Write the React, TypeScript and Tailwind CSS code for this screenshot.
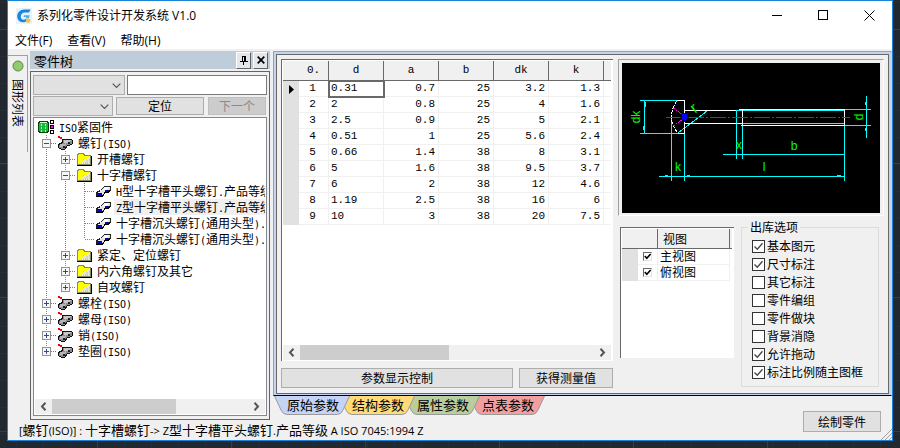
import React from "react";

const sans = "font-['Open_Sans','Noto_Sans_CJK_SC',sans-serif]";
const song = "font-['Noto_Sans_CJK_SC',sans-serif]";

/* Text in which Latin runs are set in a narrow monospaced face. */
function Mixed({ text }: { text: string }) {
  const parts = text.split(/([\x20-\x7e]+)/).filter(Boolean);
  return (
    <>
      {parts.map((part, i) =>
        /^[\x20-\x7e]/.test(part) ? (
          <span key={i} className="font-['DejaVu_Sans_Mono',monospace] text-[10px]">
            {part}
          </span>
        ) : (
          <span key={i}>{part}</span>
        ),
      )}
    </>
  );
}

function AppLogo() {
  return (
    <svg width="16" height="16" viewBox="0 0 16 16" aria-hidden="true">
      <rect width="16" height="16" fill="#e4f3fd" />
      <path d="M14.5 1.5H8.2C4.2 1.5 1.2 4.6 1.2 8.3c0 3.4 2.4 5.9 5.6 5.9 1.6 0 3-.5 4-1.5l-.6-2.2c-.8.8-1.7 1.2-2.7 1.2-1.700 0-2.700-1.200-2.700-2.900C4.800 6.300 6.400 4.600 8.800 4.600h4.300z" fill="#1b86dc" />
      <path d="M8 7.200h5.800l-1 3H10V9H7.500z" fill="#45b4f2" />
      <circle cx="12.200" cy="12.600" r="2.300" fill="#f3bf57" />
    </svg>
  );
}

type Joint = "pass" | "tee" | "end" | "plus" | "minus" | "plusEnd";

/* One column of the tree's dotted guide lines, with its expander box. */
function Guide({ kind }: { kind: Joint }) {
  const box = kind === "plus" || kind === "minus" || kind === "plusEnd";
  const bottom = kind === "end" || kind === "plusEnd" ? 8 : 16;
  return (
    <svg width="19" height="16" viewBox="0 0 19 16" shapeRendering="crispEdges" className="shrink-0" aria-hidden="true">
      <path d={`M9.5 0V${bottom}`} stroke="#808080" strokeDasharray="1 1" />
      {kind !== "pass" && <path d="M10 8.500H19" stroke="#808080" strokeDasharray="1 1" />}
      {box && (
        <>
          <rect x="5.500" y="4.500" width="8" height="8" fill="#f7f7f7" stroke="#919191" />
          <path d="M7 8.500H12" stroke="#34479b" />
          {kind !== "minus" && <path d="M9.500 6V11" stroke="#34479b" />}
        </>
      )}
    </svg>
  );
}

type IconKind = "db" | "part" | "folder" | "screw";

function NodeIcon({ kind }: { kind: IconKind }) {
  return (
    <svg width="19" height="16" viewBox="0 0 19 16" shapeRendering="crispEdges" className="shrink-0" aria-hidden="true">
      {kind === "db" && (
        <>
          <path d="M1.500 3.500l2-1h6l2 1v9l-2 1h-6l-2-1z" fill="#18b83a" stroke="#0b3d14" />
          <path d="M3 3.500h7" stroke="#d7ffd7" />
          <path d="M4.500 5v8M8.500 5v8" stroke="#b9f5c0" strokeDasharray="2 1" />
          <path d="M13.500 1.500h3v3h-3zM13.500 11.500h3v3h-3z" fill="#fff" stroke="#000" />
          <path d="M13.500 6.500h3v3h-3z" fill="#f0f" stroke="#000" />
        </>
      )}
      {kind === "part" && (
        <>
          <path d="M2.500 9.500l4-2V4.500h9l1 1v3l-3 2h-2l-3 4h-3l-3-2z" fill="#8c8c8c" stroke="#111" />
          <path d="M8 5h7l-3 3H8z" fill="#c8c8c8" />
          <path d="M4 9h4l2-1v2l-3 2H4z" fill="#b4b4b4" />
          <path d="M7 11h2v2H7zM12 7h2v2h-2z" fill="#222" />
          <rect x="2" y="1" width="2" height="2" fill="#f00" />
          <rect x="4" y="2" width="2" height="2" fill="#f00" />
        </>
      )}
      {kind === "folder" && (
        <>
          <path d="M2.500 4.500l1-2h5l1 2h6v9h-13z" fill="#ff0" stroke="#8a8a5a" />
          <path d="M15 5v8H5z" fill="#e8e8da" />
          <path d="M14 8h1M12 9h3M11 10h2M10 11h5M8 12h6" stroke="#c9c98f" strokeDasharray="1 1" />
          <path d="M2 14.500h15M16.500 5v10" stroke="#000" />
        </>
      )}
      {kind === "screw" && (
        <>
          <path d="M2.500 9.500l4-2 4-4h6v4l-5 1-3 5h-6z" fill="#e4e4e4" stroke="#222" />
          <path d="M8 7l4-3h4l-4 3z" fill="#fff" />
          <path d="M3 10h5v3H3zM11 7h3v2h-3z" fill="#00c" />
          <path d="M2 13.500h6l3-4h3l2-2" fill="none" stroke="#000" />
        </>
      )}
    </svg>
  );
}

type TreeRow = { guides: Joint[]; icon: IconKind; text: string; selected?: boolean };

const treeRows: TreeRow[] = [
  { guides: [], icon: "db", text: "ISO紧固件" },
  { guides: ["minus"], icon: "part", text: "螺钉(ISO)" },
  { guides: ["pass", "plus"], icon: "folder", text: "开槽螺钉" },
  { guides: ["pass", "minus"], icon: "folder", text: "十字槽螺钉" },
  { guides: ["pass", "pass", "tee"], icon: "screw", text: "H型十字槽平头螺钉.产品等级" },
  { guides: ["pass", "pass", "tee"], icon: "screw", text: "Z型十字槽平头螺钉.产品等级", selected: true },
  { guides: ["pass", "pass", "tee"], icon: "screw", text: "十字槽沉头螺钉(通用头型)." },
  { guides: ["pass", "pass", "end"], icon: "screw", text: "十字槽沉头螺钉(通用头型)." },
  { guides: ["pass", "plus"], icon: "folder", text: "紧定、定位螺钉" },
  { guides: ["pass", "plus"], icon: "folder", text: "内六角螺钉及其它" },
  { guides: ["pass", "plusEnd"], icon: "folder", text: "自攻螺钉" },
  { guides: ["plus"], icon: "part", text: "螺栓(ISO)" },
  { guides: ["plus"], icon: "part", text: "螺母(ISO)" },
  { guides: ["plus"], icon: "part", text: "销(ISO)" },
  { guides: ["plusEnd"], icon: "part", text: "垫圈(ISO)" },
];

function ScrollBar({ thumb }: { thumb: string }) {
  return (
    <div className="flex h-[15px] shrink-0 items-stretch bg-[#f0f0f0]">
      <button type="button" aria-label="向左滚动" className="flex w-[17px] items-center justify-center">
        <svg width="7" height="9" viewBox="0 0 7 9" aria-hidden="true">
          <path d="M5.500 .8L2 4.500l3.500 3.700" fill="none" stroke="#555" strokeWidth="2" />
        </svg>
      </button>
      <div className={`bg-[#cdcdcd] ${thumb}`} />
      <div className="flex-1" />
      <button type="button" aria-label="向右滚动" className="flex w-[17px] items-center justify-center">
        <svg width="7" height="9" viewBox="0 0 7 9" aria-hidden="true">
          <path d="M1.500 .8L5 4.500 1.500 8.200" fill="none" stroke="#555" strokeWidth="2" />
        </svg>
      </button>
    </div>
  );
}

function Combo({ label, width }: { label: string; width: string }) {
  return (
    <div className={`relative h-5 shrink-0 ${width}`}>
      <select aria-label={label} className="h-full w-full appearance-none border border-[#adadad] bg-[#e1e1e1]" />
      <svg width="9" height="6" viewBox="0 0 9 6" className="pointer-events-none absolute top-2 right-1" aria-hidden="true">
        <path d="M.7 .7l3.800 3.800L8.300 .7" fill="none" stroke="#555" strokeWidth="1.200" />
      </svg>
    </div>
  );
}

const btn = "border border-[#adadad] bg-[#e1e1e1] flex items-center justify-center text-xs leading-none";
const captionBtn =
  "flex h-[17px] w-[15px] items-center justify-center border border-t-white border-r-[#606468] border-b-[#606468] border-l-white bg-[#e4e6e9]";

function PartsPanel() {
  return (
    <aside className="mr-[3px] ml-0.5 flex min-w-0 flex-1 flex-col pt-px">
      <div className="flex h-[18px] shrink-0 items-center gap-0.5 bg-[#bfcddb] pr-0.5 pl-1">
        <h2 className={`flex-1 text-[13px] leading-none ${song}`}>零件树</h2>
        <button type="button" aria-label="固定" className={captionBtn}>
          <svg width="8" height="9" viewBox="0 0 8 9" shapeRendering="crispEdges" aria-hidden="true">
            <path d="M2.500 5V.5h3V5M4.500 0v5M0 5.500h8M3.500 5v4" fill="none" stroke="#000" />
          </svg>
        </button>
        <button type="button" aria-label="关闭" className={captionBtn}>
          <svg width="8" height="8" viewBox="0 0 8 8" aria-hidden="true">
            <path d="M.7 .7l6.600 6.600M7.300 .7L.7 7.300" stroke="#000" strokeWidth="1.700" />
          </svg>
        </button>
      </div>
      <div className="mt-0.5 flex min-h-0 flex-1 flex-col border border-[#646464] px-0.5 pt-[3px] pb-[3px]">
        <div className="flex gap-0.5">
          <Combo label="标准" width="w-[92px]" />
          <input aria-label="零件名称" className="h-5 min-w-0 flex-1 border border-[#7a7a7a] bg-white px-1 text-xs" />
        </div>
        <div className="mt-px flex items-start pr-px">
          <Combo label="类别" width="w-20" />
          <button type="button" className={`mt-px ml-[3px] h-[18px] w-[88px] ${btn}`}>定位</button>
          <button type="button" disabled className="mt-px ml-1 flex h-[18px] flex-1 items-center justify-center border border-[#bfbfbf] bg-[#cccccc] text-xs leading-none text-[#8a8a8a]">
            下一个
          </button>
        </div>
        <div className="mt-px flex min-h-0 flex-1 flex-col border border-[#828790] bg-white p-px">
          <ul role="tree" className="min-h-0 flex-1 overflow-hidden pl-0.5">
            {treeRows.map((row, i) => (
              <li key={i} role="treeitem" aria-selected={!!row.selected} className="flex h-4 items-center">
                {row.guides.map((g, j) => (
                  <Guide key={j} kind={g} />
                ))}
                <NodeIcon kind={row.icon} />
                <span
                  className={`ml-px h-4 pl-0.5 text-xs leading-4 whitespace-nowrap ${row.selected ? "bg-[#f0f0f0]" : ""}`}
                >
                  <Mixed text={row.text} />
                </span>
              </li>
            ))}
          </ul>
          <ScrollBar thumb="w-[124px]" />
        </div>
      </div>
    </aside>
  );
}

const columns = ["d", "a", "b", "dk", "k"];
const rows = [
  ["0.31", "0.7", "25", "3.2", "1.3"],
  ["2", "0.8", "25", "4", "1.6"],
  ["2.5", "0.9", "25", "5", "2.1"],
  ["0.51", "1", "25", "5.6", "2.4"],
  ["0.66", "1.4", "38", "8", "3.1"],
  ["5", "1.6", "38", "9.5", "3.7"],
  ["6", "2", "38", "12", "4.6"],
  ["1.19", "2.5", "38", "16", "6"],
  ["10", "3", "38", "20", "7.5"],
];

const headCell = "h-5 border-b border-[#696969] bg-[#f0f0f0] p-0 font-normal";

function ParamTable() {
  return (
    <div className="flex min-h-0 flex-1 flex-col overflow-hidden border-t border-l border-[#696969] bg-white pt-px pr-0.5 pb-px pl-px">
      <div className="min-h-0 flex-1 overflow-hidden">
        <table className="w-full table-fixed border-separate border-spacing-0 font-['Liberation_Mono',monospace] text-[11px] leading-[15px]">
          <colgroup>
            <col className="w-4" />
            <col className="w-[30px]" />
            {columns.map((c) => (
              <col key={c} className="w-[55px]" />
            ))}
            <col />
          </colgroup>
          <thead>
            <tr>
              <th className={headCell} />
              <th className={`${headCell} border-r`}>0.</th>
              {columns.map((c) => (
                <th key={c} scope="col" className={`${headCell} border-r`}>
                  {c}
                </th>
              ))}
              <th className={headCell} />
            </tr>
          </thead>
          <tbody>
            {rows.map((row, i) => (
              <tr key={i}>
                <td className="h-4 bg-[#e1e1e1] p-0">
                  {i === 0 && (
                    <svg width="5" height="9" viewBox="0 0 5 9" className="ml-1.5" aria-hidden="true">
                      <path d="M0 0l5 4.500L0 9z" />
                    </svg>
                  )}
                </td>
                <th scope="row" className="border-r border-b border-[#f0f0f0] p-0 pr-0.5 font-normal">
                  {i + 1}
                </th>
                {row.map((v, j) => (
                  <td
                    key={j}
                    className={`border-r border-b border-[#f0f0f0] p-0 ${j === 0 ? "pl-0.5 text-left" : "pr-[3px] text-right"} ${
                      i === 0 && j === 0 ? "outline-2 -outline-offset-1 outline-[#696969]" : ""
                    }`}
                  >
                    {v}
                  </td>
                ))}
                <td className="border-b border-[#f0f0f0] p-0" />
              </tr>
            ))}
          </tbody>
        </table>
      </div>
      <ScrollBar thumb="w-[149px]" />
    </div>
  );
}

function Drawing() {
  return (
    <svg viewBox="0 0 258 150" className="block w-full bg-black" role="img" aria-label="螺钉尺寸图">
      <g fill="none" shapeRendering="crispEdges">
        <g stroke="#0ff">
          <path d="M18 37.500H62M18 70.500H62M22.500 37V71M49.500 54V118M62.500 70V118M37 113.500H222M101 91.500H222M222.500 62V118" />
          <path d="M114.500 47V96M120.500 62V96M114 47.500H222M120 60.500H222M222 46.500H249M222 62.500H249M244.500 33V75" />
          <path d="M23.500 39V44M21.500 63V67M43 112.500h3M65 112.500h3M215 112.500h4M243.500 39v3M243.500 65v3" />
          <path d="M56 70L85 48" />
        </g>
        <path d="M55 37.500H62.500V70.500H56M62 47.500H114M62 60.500H120M117 46.500H222.500V62.500H119M120.500 47V62" stroke="#fff" />
        <path d="M55 38Q49.500 45 49.500 54T56 70" stroke="#fff" strokeDasharray="4 1" />
        <path d="M44 54.500H228" stroke="#f00" strokeDasharray="16 2 2 2" />
        <path d="M51 45L60 51M51 63L60 57" stroke="#f0f" strokeDasharray="2 1" />
        <path d="M59.500 50.500l6 7M65.500 50.500l-6 7M58 54.500h9M62.500 50v9M60.500 51.500h4v5h-4z" stroke="#00f" />
      </g>
      <g fill="#0f0" className="font-['Liberation_Sans',sans-serif] text-[12px]" textAnchor="middle">
        <text transform="translate(18 54) rotate(-90)">dk</text>
        <text transform="translate(241 54) rotate(-90)">d</text>
        <text transform="translate(75 49) rotate(-38)" className="text-base">r</text>
        <text x="117" y="86">x</text>
        <text x="172" y="87">b</text>
        <text x="56" y="108">k</text>
        <text x="142" y="108">l</text>
      </g>
    </svg>
  );
}

const views = ["主视图", "俯视图"];

function ViewTable() {
  return (
    <div className="mt-[11px] ml-0.5 h-[131px] w-[114px] shrink-0 border-t border-l border-[#696969] bg-white pt-px pr-0.5 pl-px">
      <table className="w-full table-fixed border-separate border-spacing-0 text-xs leading-[14px]">
        <colgroup>
          <col className="w-4" />
          <col className="w-5" />
          <col />
          <col className="w-0.5" />
        </colgroup>
        <thead>
          <tr>
            <th className={headCell} />
            <th className={`${headCell} border-r`} />
            <th scope="col" className={`${headCell} border-r pl-[5px] text-left`}>视图</th>
            <th className={headCell} />
          </tr>
        </thead>
        <tbody>
          {views.map((v) => (
            <tr key={v}>
              <td className="h-4 bg-[#e1e1e1] p-0" />
              <td className="border-r border-b border-[#f0f0f0] p-0">
                <span className="relative mx-auto block h-[9px] w-[9px]">
                  <input
                    type="checkbox"
                    defaultChecked
                    aria-label={v}
                    className="peer block h-[9px] w-[9px] appearance-none border border-t-[#696969] border-r-[#e3e3e3] border-b-[#e3e3e3] border-l-[#696969] bg-white"
                  />
                  <svg
                    width="9"
                    height="9"
                    viewBox="0 0 9 9"
                    aria-hidden="true"
                    className="pointer-events-none absolute inset-0 hidden peer-checked:block"
                  >
                    <path d="M1.800 4l2 2.200L7.600 2" fill="none" stroke="#000" strokeWidth="1.600" />
                  </svg>
                </span>
              </td>
              <td className="border-r border-b border-[#f0f0f0] p-0 pb-px pl-0.5">{v}</td>
              <td className="p-0" />
            </tr>
          ))}
        </tbody>
      </table>
    </div>
  );
}

const options: [string, boolean][] = [
  ["基本图元", true],
  ["尺寸标注", true],
  ["其它标注", false],
  ["零件编组", false],
  ["零件做块", false],
  ["背景消隐", false],
  ["允许拖动", true],
  ["标注比例随主图框", true],
];

function ExportOptions() {
  return (
    <fieldset className="mt-1 ml-[7px] h-[167px] w-[138px] shrink-0 border border-[#dcdcdc] px-[10px] pt-[3px]">
      <legend className="-ml-1 px-0.5 text-xs leading-[14px]">出库选项</legend>
      {options.map(([name, on]) => (
        <label key={name} className="flex h-[18px] items-center gap-0.5 text-xs leading-none whitespace-nowrap">
          <span className="relative h-[13px] w-[13px] shrink-0">
            <input type="checkbox" defaultChecked={on} className="peer block h-[13px] w-[13px] appearance-none border border-[#333] bg-white" />
            <svg
              width="13"
              height="13"
              viewBox="0 0 13 13"
              aria-hidden="true"
              className="pointer-events-none absolute inset-0 hidden peer-checked:block"
            >
              <path d="M2.500 6.500l2.800 2.800 5.200-6" fill="none" stroke="#444" strokeWidth="1.300" />
            </svg>
          </span>
          {name}
        </label>
      ))}
    </fieldset>
  );
}

const tabs = [
  { name: "原始参数", fill: "#c5d3f5", z: "z-40" },
  { name: "结构参数", fill: "#ffdb78", z: "z-30" },
  { name: "属性参数", fill: "#bacd9c", z: "z-20" },
  { name: "点表参数", fill: "#f29f9f", z: "z-10" },
];

function SheetTabs() {
  return (
    <div role="tablist" className="isolate flex items-start pl-px">
      {tabs.map((t, i) => (
        <button
          key={t.name}
          type="button"
          role="tab"
          aria-selected={i === 0}
          className={`relative -mr-[11px] h-[19px] w-[76px] pb-0.5 pl-0.5 text-[13px] leading-none ${t.z} ${song}`}
        >
          <svg width="76" height="19" viewBox="0 0 76 19" className="absolute inset-0 -z-10" aria-hidden="true">
            <path d="M0 -1L7 14Q9 18.500 13 18.500H63Q67 18.500 69 14L76 -1" fill={t.fill} stroke="#9a9a9a" />
          </svg>
          {t.name}
        </button>
      ))}
    </div>
  );
}

const statusLatin = "font-['Open_Sans',sans-serif] text-[11px]";

export default function App() {
  return (
    <div
      className={`flex h-screen w-full flex-col bg-[#212830] bg-[linear-gradient(#353e4d_1px,transparent_1px),linear-gradient(90deg,#353e4d_1px,transparent_1px),linear-gradient(#262d38_1px,transparent_1px),linear-gradient(90deg,#262d38_1px,transparent_1px)] bg-[size:134px_134px,134px_134px,27px_27px,27px_27px] bg-[position:97px_29px] px-[7px] pb-[7px] text-black ${song}`}
    >
      <div className="flex min-h-0 flex-1 flex-col border border-[#1883d7] bg-[#f0f0f0]">
        <header className="flex h-[29px] shrink-0 items-center bg-white pl-2">
          <AppLogo />
          <h1 className={`ml-[5px] flex-1 text-xs leading-none ${sans}`}>系列化零件设计开发系统 V1.0</h1>
          <button type="button" aria-label="最小化" className="flex h-full w-[46px] items-center justify-center">
            <svg width="11" height="11" shapeRendering="crispEdges" aria-hidden="true">
              <path d="M0 5.500H10" stroke="#000" />
            </svg>
          </button>
          <button type="button" aria-label="最大化" className="flex h-full w-[46px] items-center justify-center">
            <svg width="11" height="11" shapeRendering="crispEdges" aria-hidden="true">
              <path d="M.5 .5h9v9h-9z" fill="none" stroke="#000" />
            </svg>
          </button>
          <button type="button" aria-label="关闭窗口" className="flex h-full w-[46px] items-center justify-center">
            <svg width="11" height="11" aria-hidden="true">
              <path d="M.5 .5l10 10M10.500 .5l-10 10" stroke="#000" />
            </svg>
          </button>
        </header>
        <nav className={`flex h-5 shrink-0 items-center gap-[15px] border-b border-[#f0f0f0] bg-white pt-0.5 pl-[7px] text-xs leading-none ${sans}`}>
          <button type="button">文件(F)</button>
          <button type="button">查看(V)</button>
          <button type="button">帮助(H)</button>
        </nav>

        <div className="grid min-h-0 flex-1 grid-cols-[265px_1fr_auto] grid-rows-[minmax(0,1fr)_24px_20px]">
          <div className="row-span-2 flex min-h-0">
            <button
              type="button"
              className="mt-[5px] flex h-[97px] w-5 shrink-0 flex-col items-center gap-[7px] border-t border-r border-[#a0a0a0] pt-1 text-xs leading-none"
            >
              <svg width="12" height="12" aria-hidden="true">
                <circle cx="6" cy="6" r="5" fill="#92cb6e" stroke="#5b8a45" />
              </svg>
              <span className="[text-orientation:sideways] [writing-mode:vertical-rl]">图形列表</span>
            </button>
            <PartsPanel />
          </div>

          <main className="col-span-2 mt-px flex min-h-0 border border-[#a0a0a0] border-r-[#c4d3f0] border-b-black bg-[#c4d3f0] px-0.5 pt-0.5 pb-px">
            <div className="flex min-w-0 flex-1 gap-[5px] border border-[#696969] bg-[#f0f0f0] px-1 pt-1 pb-[5px]">
              <div className="flex min-w-0 flex-1 flex-col gap-[7px]">
                <ParamTable />
                <div className="flex gap-1.5">
                  <button type="button" className={`h-5 flex-1 ${btn}`}>参数显示控制</button>
                  <button type="button" className={`h-5 w-[94px] ${btn}`}>获得测量值</button>
                </div>
              </div>
              <div className="flex w-[266px] shrink-0 flex-col">
                <div className="shrink-0 border border-t-[#a0a0a0] border-r-white border-b-white border-l-[#a0a0a0] px-[3px] pt-[3px] pb-0.5">
                  <Drawing />
                </div>
                <div className="flex items-start">
                  <ViewTable />
                  <ExportOptions />
                </div>
              </div>
            </div>
          </main>

          <SheetTabs />
          <div className="row-span-2 flex items-start pt-[15px]">
            <button type="button" className={`h-[21px] w-[78px] ${btn}`}>绘制零件</button>
            <svg width="11" height="11" viewBox="0 0 11 11" className="self-end" aria-hidden="true">
              <path d="M0 11L11 0M4 11l7-7M8 11l3-3" stroke="#a0a0a0" />
            </svg>
          </div>
          <p className="col-span-2 self-center pl-[11px] text-[13px] leading-5 whitespace-nowrap">
            <span className={statusLatin}>[</span>螺钉
            <span className={statusLatin}>(ISO)] : </span>十字槽螺钉
            <span className={statusLatin}>-&gt; Z</span>型十字槽平头螺钉
            <span className={statusLatin}>.</span>产品等级
            <span className={statusLatin}> A ISO 7045:1994 Z</span>
          </p>
        </div>
      </div>
    </div>
  );
}
